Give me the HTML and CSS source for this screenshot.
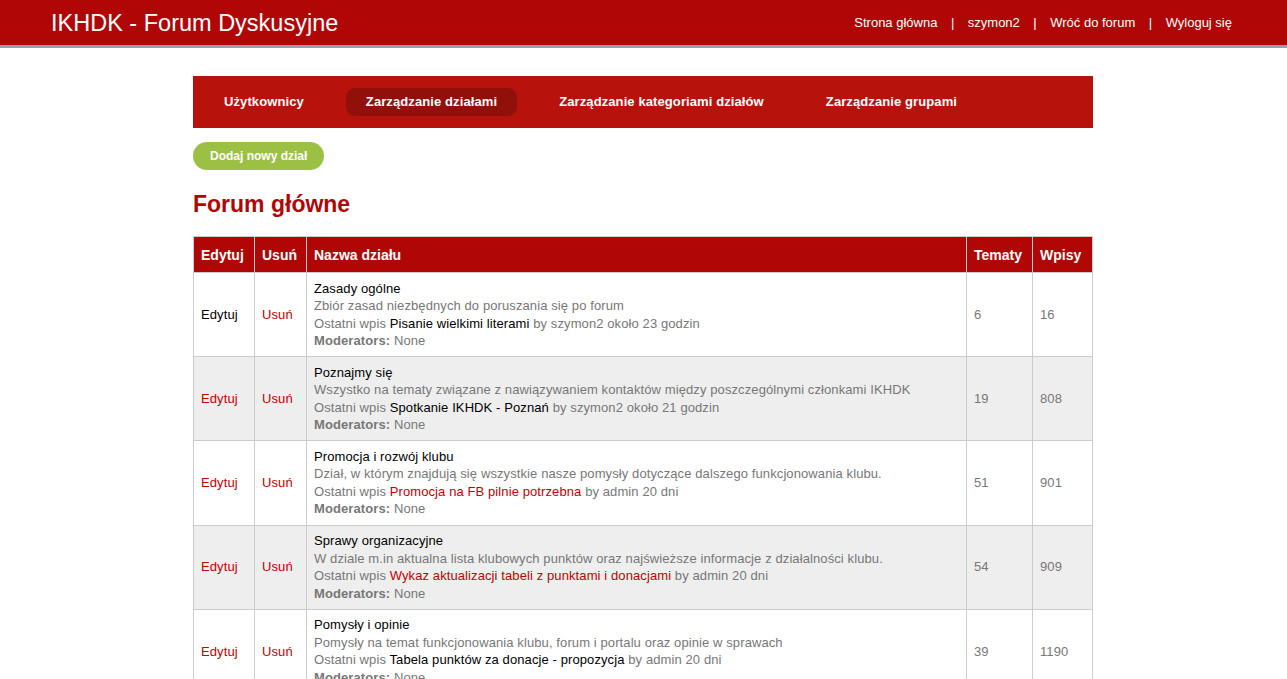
FILE: index.html
```html
<!DOCTYPE html>
<html lang="pl">
<head>
<meta charset="utf-8">
<title>IKHDK - Forum Dyskusyjne</title>
<link rel="stylesheet" href="styles.css">
</head>
<body>
<header class="topbar">
  <div class="brand">IKHDK - Forum Dyskusyjne</div>
  <nav class="usernav">
    <a href="#">Strona główna</a><span class="sep">|</span><a href="#">szymon2</a><span class="sep">|</span><a href="#">Wróć do forum</a><span class="sep">|</span><a href="#">Wyloguj się</a>
  </nav>
</header>
<main class="page">
  <nav class="adminnav">
    <a href="#" class="tab">Użytkownicy</a>
    <a href="#" class="tab active">Zarządzanie działami</a>
    <a href="#" class="tab">Zarządzanie kategoriami działów</a>
    <a href="#" class="tab">Zarządzanie grupami</a>
  </nav>
  <a href="#" class="btn-add">Dodaj nowy dział</a>
  <h1 class="section-title">Forum główne</h1>
  <table class="forums">
    <colgroup>
      <col class="c-edit"><col class="c-del"><col><col class="c-topics"><col class="c-posts">
    </colgroup>
    <thead>
      <tr><th>Edytuj</th><th>Usuń</th><th>Nazwa działu</th><th>Tematy</th><th>Wpisy</th></tr>
    </thead>
    <tbody>
      <tr>
        <td><a href="#" class="dark">Edytuj</a></td>
        <td><a href="#" class="red">Usuń</a></td>
        <td class="info">
          <div class="name">Zasady ogólne</div>
          <div>Zbiór zasad niezbędnych do poruszania się po forum</div>
          <div>Ostatni wpis <a href="#" class="dark">Pisanie wielkimi literami</a> by szymon2 około 23 godzin</div>
          <div><b>Moderators:</b> None</div>
        </td>
        <td class="num">6</td>
        <td class="num">16</td>
      </tr>
      <tr>
        <td><a href="#" class="red">Edytuj</a></td>
        <td><a href="#" class="red">Usuń</a></td>
        <td class="info">
          <div class="name">Poznajmy się</div>
          <div>Wszystko na tematy związane z nawiązywaniem kontaktów między poszczególnymi członkami IKHDK</div>
          <div>Ostatni wpis <a href="#" class="dark">Spotkanie IKHDK - Poznań</a> by szymon2 około 21 godzin</div>
          <div><b>Moderators:</b> None</div>
        </td>
        <td class="num">19</td>
        <td class="num">808</td>
      </tr>
      <tr>
        <td><a href="#" class="red">Edytuj</a></td>
        <td><a href="#" class="red">Usuń</a></td>
        <td class="info">
          <div class="name">Promocja i rozwój klubu</div>
          <div>Dział, w którym znajdują się wszystkie nasze pomysły dotyczące dalszego funkcjonowania klubu.</div>
          <div>Ostatni wpis <a href="#" class="red">Promocja na FB pilnie potrzebna</a> by admin 20 dni</div>
          <div><b>Moderators:</b> None</div>
        </td>
        <td class="num">51</td>
        <td class="num">901</td>
      </tr>
      <tr>
        <td><a href="#" class="red">Edytuj</a></td>
        <td><a href="#" class="red">Usuń</a></td>
        <td class="info">
          <div class="name">Sprawy organizacyjne</div>
          <div>W dziale m.in aktualna lista klubowych punktów oraz najświeższe informacje z działalności klubu.</div>
          <div>Ostatni wpis <a href="#" class="red">Wykaz aktualizacji tabeli z punktami i donacjami</a> by admin 20 dni</div>
          <div><b>Moderators:</b> None</div>
        </td>
        <td class="num">54</td>
        <td class="num">909</td>
      </tr>
      <tr>
        <td><a href="#" class="red">Edytuj</a></td>
        <td><a href="#" class="red">Usuń</a></td>
        <td class="info">
          <div class="name">Pomysły i opinie</div>
          <div>Pomysły na temat funkcjonowania klubu, forum i portalu oraz opinie w sprawach</div>
          <div>Ostatni wpis <a href="#" class="dark">Tabela punktów za donacje - propozycja</a> by admin 20 dni</div>
          <div><b>Moderators:</b> None</div>
        </td>
        <td class="num">39</td>
        <td class="num">1190</td>
      </tr>
    </tbody>
  </table>
</main>
</body>
</html>
```
FILE: styles.css
```css
* { box-sizing: border-box; }
html, body { margin: 0; padding: 0; background: #fff; }
body {
  font-family: "Liberation Sans", Arial, sans-serif;
  font-size: 13px;
  color: #777;
}
a { text-decoration: none; }

.topbar {
  height: 48px;
  background: #b00606;
  border-bottom: 3px solid #9f9f9f;
  display: flex;
  align-items: center;
  justify-content: space-between;
  padding: 0 55px 0 51px;
}
.brand {
  color: #fff;
  font-size: 23.5px;
  line-height: 28px;
}
.usernav {
  display: flex;
  align-items: center;
  font-size: 13px;
  color: #fff;
}
.usernav a { color: #fff; }
.usernav .sep { margin: 0 13.5px; }

.page {
  width: 900px;
  margin: 28px 0 0 calc(50% - 450.5px);
}

.adminnav {
  background: #b8120c;
  height: 52px;
  display: flex;
  align-items: center;
  gap: 22px;
  padding: 0 11px;
}
.tab {
  color: #fff;
  font-weight: bold;
  font-size: 13px;
  letter-spacing: 0.1px;
  height: 28px;
  line-height: 28px;
  padding: 0 20px;
  border-radius: 9px;
}
.tab.active { background: #92100a; }

.btn-add {
  display: inline-block;
  margin-top: 14px;
  height: 28px;
  line-height: 28px;
  padding: 0 17px;
  background: #9cc043;
  color: #fff;
  font-weight: bold;
  font-size: 12px;
  border-radius: 14px;
}

.section-title {
  margin: 19px 0 0;
  color: #b00606;
  font-size: 23px;
  line-height: 30px;
  font-weight: bold;
}

.forums {
  margin-top: 17px;
  width: 900px;
  border-collapse: collapse;
  table-layout: fixed;
}
.c-edit { width: 61px; }
.c-del { width: 52px; }
.c-topics { width: 66px; }
.c-posts { width: 60px; }

.forums th {
  background: #b00606;
  color: #fff;
  font-size: 14px;
  font-weight: bold;
  text-align: left;
  height: 36px;
  padding: 0 7px;
  border: 1px solid #ccc;
}
.forums td {
  border: 1px solid #ccc;
  padding: 6.6px 7px;
  line-height: 17.5px;
  letter-spacing: 0.1px;
  vertical-align: middle;
  font-size: 13px;
}
.forums tbody tr:nth-child(even) td { background: #eee; }
.forums td.num { color: #777; }
.info { color: #777; }
.info .name { color: #000; }
.info b { font-weight: bold; }
a.dark { color: #000; }
a.red { color: #c30000; }
```
